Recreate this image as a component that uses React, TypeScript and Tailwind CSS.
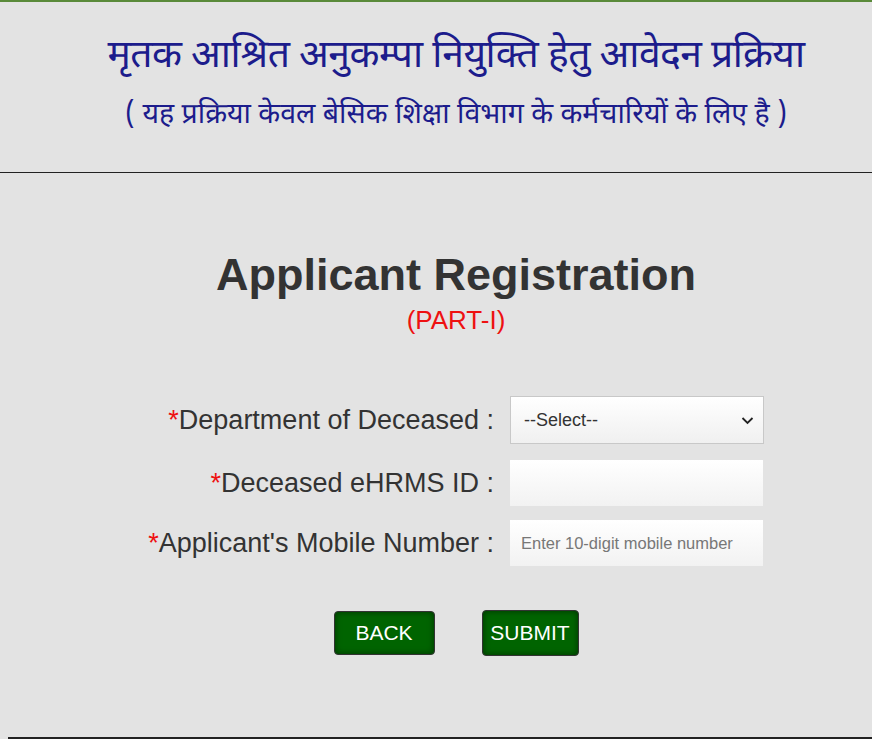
import React from "react";

export default function App() {
  return (
    <div className="min-h-[739px] w-[872px] bg-[#e3e3e3] flex flex-col" style={{ fontFamily: '"Liberation Sans", Arial, sans-serif' }}>
      <div className="h-[2px] bg-[#5a8a3a]" />
      <div className="h-[171px] border-b border-[#222] pl-[40px] flex flex-col items-center pt-[30px] text-[#1c1c8c]" style={{ fontFamily: '"Noto Sans Devanagari", "Noto Sans", "Liberation Serif", serif' }}>
        <div className="text-[39px] leading-[52px] tracking-[-0.5px] whitespace-nowrap">मृतक आश्रित अनुकम्पा नियुक्ति हेतु आवेदन प्रक्रिया</div>
        <div className="text-[28.5px] leading-[40px] mt-[12px] whitespace-nowrap">( यह प्रक्रिया केवल बेसिक शिक्षा विभाग के कर्मचारियों के लिए है )</div>
      </div>
      <div className="flex flex-col items-center pt-[79px] pl-[40px] flex-1">
        <div className="text-[45px] font-bold text-[#333] leading-[46px]">Applicant Registration</div>
        <div className="text-[26px] text-[#e11] leading-[30px] mt-[7px]">(PART-I)</div>
        <div className="mt-[61px] flex flex-col w-full">
          <div className="flex items-center">
            <div className="w-[454px] text-right text-[27px] text-[#333] leading-[32px]"><span className="text-[#e11]">*</span>Department of Deceased :</div>
            <div className="ml-[16px] w-[254px] h-[48px] bg-gradient-to-b from-white to-[#f0f0f0] border border-[#c8c8c8] flex items-center justify-between pl-[13px] pr-[9px] text-[18px] text-[#333]">
              <span>--Select--</span>
              <svg width="13" height="12" viewBox="0 0 13 12"><path d="M1.5 4 L6.5 9 L11.5 4" stroke="#222" strokeWidth="1.8" fill="none" /></svg>
            </div>
          </div>
          <div className="flex items-center mt-[16px]">
            <div className="w-[454px] text-right text-[27px] text-[#333] leading-[32px]"><span className="text-[#e11]">*</span>Deceased eHRMS ID :</div>
            <div className="ml-[16px] w-[253px] h-[46px] bg-gradient-to-b from-white to-[#f2f2f2]" />
          </div>
          <div className="flex items-center mt-[14px]">
            <div className="w-[454px] text-right text-[27px] text-[#333] leading-[32px]"><span className="text-[#e11]">*</span>Applicant's Mobile Number :</div>
            <div className="ml-[16px] w-[253px] h-[46px] bg-gradient-to-b from-white to-[#f2f2f2] flex items-center px-[11px] text-[16.5px] text-[#777]">Enter 10-digit mobile number</div>
          </div>
        </div>
        <div className="mt-[44px] flex items-center gap-[47px]">
          <button className="w-[101px] h-[44px] rounded-[4px] border border-[#333] bg-[#006400] text-white text-[21px] shadow-[inset_0_0_6px_rgba(0,0,0,0.5)]">BACK</button>
          <button className="w-[97px] h-[46px] rounded-[4px] border border-[#333] bg-[#006400] text-white text-[21px] shadow-[inset_0_0_6px_rgba(0,0,0,0.5)]">SUBMIT</button>
        </div>
      </div>
      <div className="h-[2px] bg-[#222] ml-[8px]" />
    </div>
  );
}
